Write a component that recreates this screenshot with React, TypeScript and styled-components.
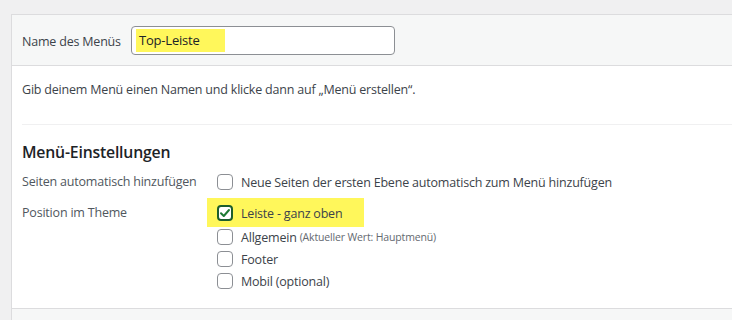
import React from 'react';
import styled, { createGlobalStyle } from 'styled-components';

const GlobalStyle = createGlobalStyle`
    body {
        margin: 0;
        background: #f0f0f1;
        font-family: "Open Sans", "Noto Sans", sans-serif;
        font-size: 12.5px;
        letter-spacing: -0.2px;
        color: #3c434a;
    }
`;

const Page = styled.div`
    padding: 14px 0 0 11px;
    height: 306px;
    overflow: hidden;
`;
const Card = styled.div`
    background: #fff;
    border: 1px solid #dcdcde;
    border-right: none;
`;
const Header = styled.div`
    display: flex;
    align-items: center;
    height: 50px;
    padding: 0 10px;
    background: #f6f7f7;
    border-bottom: 1px solid #dcdcde;
`;
const Label = styled.span`
    width: 109px;
    padding-top: 2px;
    color: #3c434a;
`;
const NameInput = styled.div`
    display: flex;
    align-items: center;
    box-sizing: border-box;
    width: 264px;
    height: 29px;
    padding: 0 4px;
    background: #fff;
    border: 1px solid #8c8f94;
    border-radius: 4px;
`;
const InputText = styled.span`
    display: inline-flex;
    align-items: center;
    box-sizing: border-box;
    height: 23px;
    width: 89px;
    padding-left: 3px;
    background: #fff75b;
    font-size: 13px;
    color: #1d2327;
`;
const Body = styled.div`
    padding: 0 0 0 10px;
`;
const Intro = styled.p`
    margin: 0;
    padding: 14px 0 24px;
    line-height: 20px;
    border-bottom: 1px solid #f0f0f1;
`;
const Heading = styled.h3`
    margin: 16px 0 0;
    line-height: 22px;
    font-size: 15.8px;
    font-weight: 600;
    color: #1d2327;
`;
const Settings = styled.div`
    display: grid;
    grid-template-columns: 185px auto;
    row-gap: 5px;
    align-items: start;
    padding: 8px 0 16px;
`;
const RowLabel = styled.div<{ $offset?: number }>`
    color: #50575e;
    line-height: 22px;
    padding-top: ${p => p.$offset || 0}px;
`;
const Options = styled.div`
    display: flex;
    flex-direction: column;
    align-items: flex-start;
`;
const Option = styled.label<{ $hl?: boolean }>`
    display: flex;
    align-items: center;
    gap: 8px;
    height: 22px;
    padding: ${p => (p.$hl ? '4px 22px 3px 10px' : '0 0 0 10px')};
    margin-bottom: ${p => (p.$hl ? '-1px' : '0')};
    background: ${p => (p.$hl ? '#fff75b' : 'transparent')};
    color: #3c434a;
`;
const Box = styled.span<{ $checked?: boolean }>`
    display: inline-flex;
    align-items: center;
    justify-content: center;
    box-sizing: border-box;
    width: 16px;
    height: 16px;
    border: ${p => (p.$checked ? '2px solid #1b5e2c' : '1px solid #8c8f94')};
    border-radius: 4px;
    background: #fff;
`;
const Hint = styled.span`
    font-size: 10.5px;
    letter-spacing: -0.15px;
    color: #646970;
    margin-left: -5px;
`;
const Footer = styled.div`
    height: 20px;
    background: #f6f7f7;
    border-top: 1px solid #dcdcde;
`;

const Check = () => (
    <svg width="12" height="12" viewBox="0 0 12 12">
        <path d="M2 6.2 L4.8 9 L10 3" fill="none" stroke="#1e7a34" strokeWidth="2" strokeLinecap="round" strokeLinejoin="round" />
    </svg>
);

const positions = [
    { name: 'Leiste - ganz oben', checked: true },
    { name: 'Allgemein', hint: '(Aktueller Wert: Hauptmenü)' },
    { name: 'Footer' },
    { name: 'Mobil (optional)' },
];

const App = () => (
    <>
        <GlobalStyle />
        <Page>
            <Card>
                <Header>
                    <Label>Name des Menüs</Label>
                    <NameInput>
                        <InputText>Top-Leiste</InputText>
                    </NameInput>
                </Header>
                <Body>
                    <Intro>Gib deinem Menü einen Namen und klicke dann auf „Menü erstellen“.</Intro>
                    <Heading>Menü-Einstellungen</Heading>
                    <Settings>
                        <RowLabel>Seiten automatisch hinzufügen</RowLabel>
                        <Options>
                            <Option>
                                <Box />
                                Neue Seiten der ersten Ebene automatisch zum Menü hinzufügen
                            </Option>
                        </Options>
                        <RowLabel $offset={4}>Position im Theme</RowLabel>
                        <Options>
                            {positions.map(p => (
                                <Option key={p.name} $hl={p.checked}>
                                    <Box $checked={p.checked}>{p.checked && <Check />}</Box>
                                    {p.name}
                                    {p.hint && <Hint>{p.hint}</Hint>}
                                </Option>
                            ))}
                        </Options>
                    </Settings>
                </Body>
                <Footer />
            </Card>
        </Page>
    </>
);

export default App;
